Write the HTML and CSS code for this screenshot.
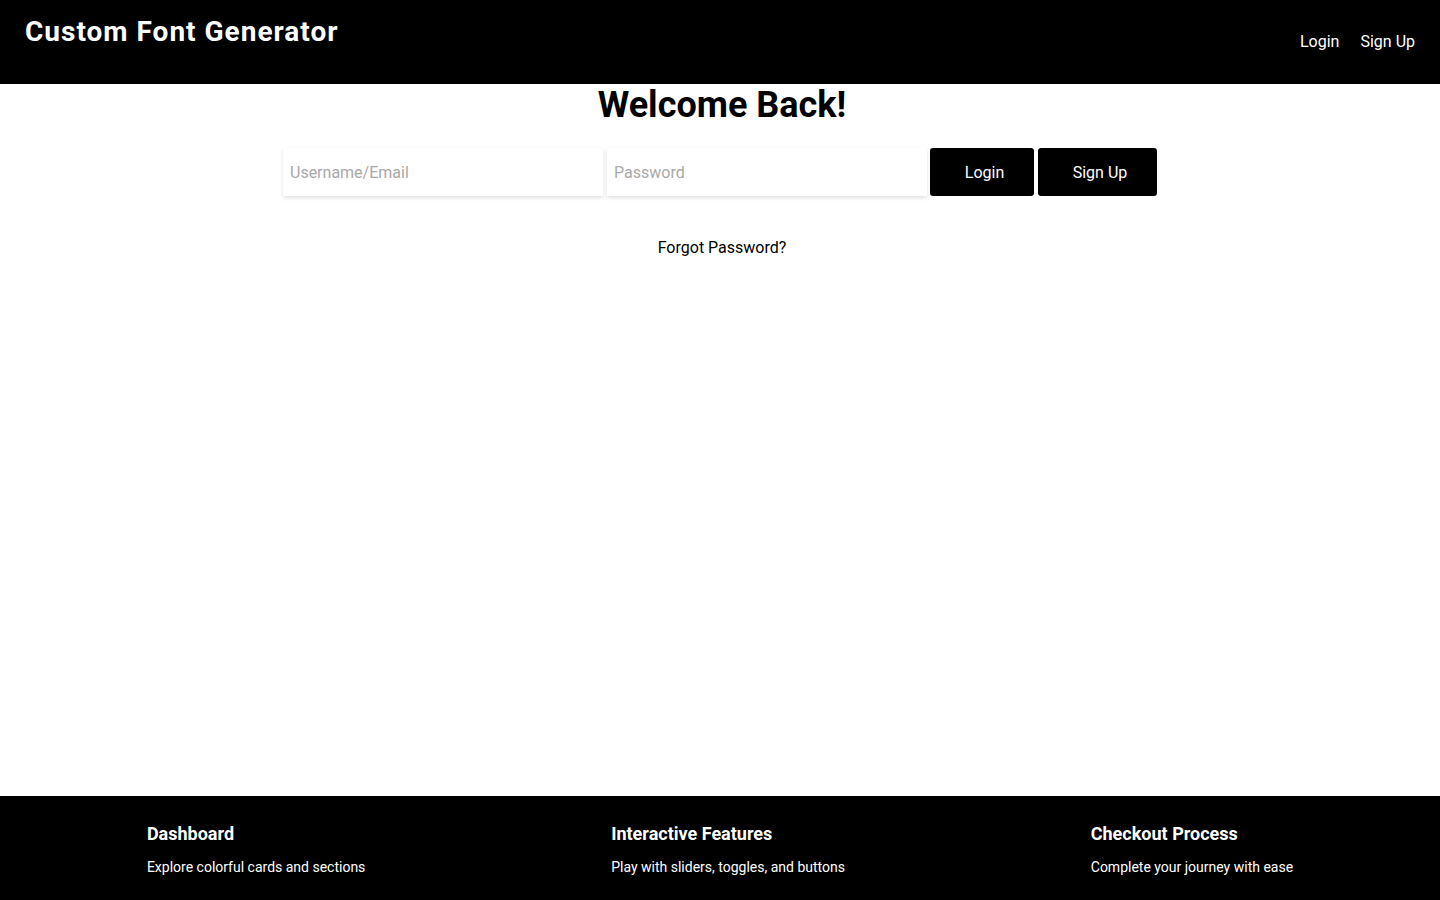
FILE: index.html
```html
<!DOCTYPE html>
<html lang="en">
<head>
<meta charset="utf-8">
<title>Custom Font Generator</title>
<link rel="stylesheet" href="styles.css">
</head>
<body>
<div class="page">
  <header class="topbar">
    <h1 class="brand">Custom Font Generator</h1>
    <nav class="nav">
      <a class="nav-link" href="#">Login</a>
      <a class="nav-link" href="#">Sign Up</a>
    </nav>
  </header>
  <main class="main">
    <h2 class="welcome">Welcome Back!</h2>
    <form class="login-form">
      <input class="field" type="text" placeholder="Username/Email">
      <input class="field" type="password" placeholder="Password">
      <button class="btn btn-login" type="button">Login</button>
      <button class="btn btn-signup" type="button">Sign Up</button>
    </form>
    <a class="forgot" href="#">Forgot Password?</a>
  </main>
  <footer class="footer">
    <div class="foot-col">
      <h3 class="foot-title">Dashboard</h3>
      <p class="foot-text">Explore colorful cards and sections</p>
    </div>
    <div class="foot-col">
      <h3 class="foot-title">Interactive Features</h3>
      <p class="foot-text">Play with sliders, toggles, and buttons</p>
    </div>
    <div class="foot-col">
      <h3 class="foot-title">Checkout Process</h3>
      <p class="foot-text">Complete your journey with ease</p>
    </div>
  </footer>
</div>
</body>
</html>
```
FILE: styles.css
```css
* { box-sizing: border-box; }
html, body { margin: 0; padding: 0; }
body {
  font-family: Roboto, "Liberation Sans", Arial, sans-serif;
  color: #000;
  background: #fff;
}
.page {
  min-height: 900px;
  display: flex;
  flex-direction: column;
}
.topbar {
  height: 84px;
  background: #000;
  color: #fff;
  display: flex;
  justify-content: space-between;
  align-items: center;
  padding: 0 25px;
}
.brand {
  margin: 0 0 22px 0;
  font-size: 28px;
  font-weight: 700;
  line-height: 33px;
  letter-spacing: 1px;
}
.nav {
  display: flex;
  gap: 21px;
  margin-bottom: 2px;
}
.nav-link {
  color: #fff;
  text-decoration: none;
  font-size: 16px;
}
.main {
  flex: 1;
  display: flex;
  flex-direction: column;
  align-items: center;
}
.welcome {
  margin: 0 0 0 4px;
  font-size: 36px;
  font-weight: 700;
  line-height: 42px;
}
.login-form {
  margin-top: 22px;
  display: flex;
  gap: 4px;
}
.field {
  width: 320px;
  height: 48px;
  border: none;
  padding: 0 7px;
  font-family: inherit;
  font-size: 16px;
  background: #fff;
  box-shadow: 0 2px 4px rgba(0,0,0,0.12);
  outline: none;
}
.field::placeholder { color: #a9a9a9; }
.btn {
  height: 48px;
  border: none;
  border-radius: 3px;
  background: #000;
  color: #fff;
  font-family: inherit;
  font-size: 16px;
  padding: 0 0 0 5px;
  text-align: center;
}
.btn-login { width: 104px; margin-left: -1px; }
.btn-signup { width: 119px; }
.forgot {
  margin: 42px 0 0 4px;
  color: #000;
  text-decoration: none;
  font-size: 16px;
  line-height: 19px;
}
.footer {
  height: 104px;
  background: #000;
  color: #fff;
  display: flex;
  justify-content: space-around;
  padding: 27px 24px 0;
}
.foot-title {
  margin: 0;
  font-size: 18px;
  font-weight: 700;
  line-height: 21px;
}
.foot-text {
  margin: 15px 0 0;
  font-size: 14px;
  line-height: 16px;
}
```
